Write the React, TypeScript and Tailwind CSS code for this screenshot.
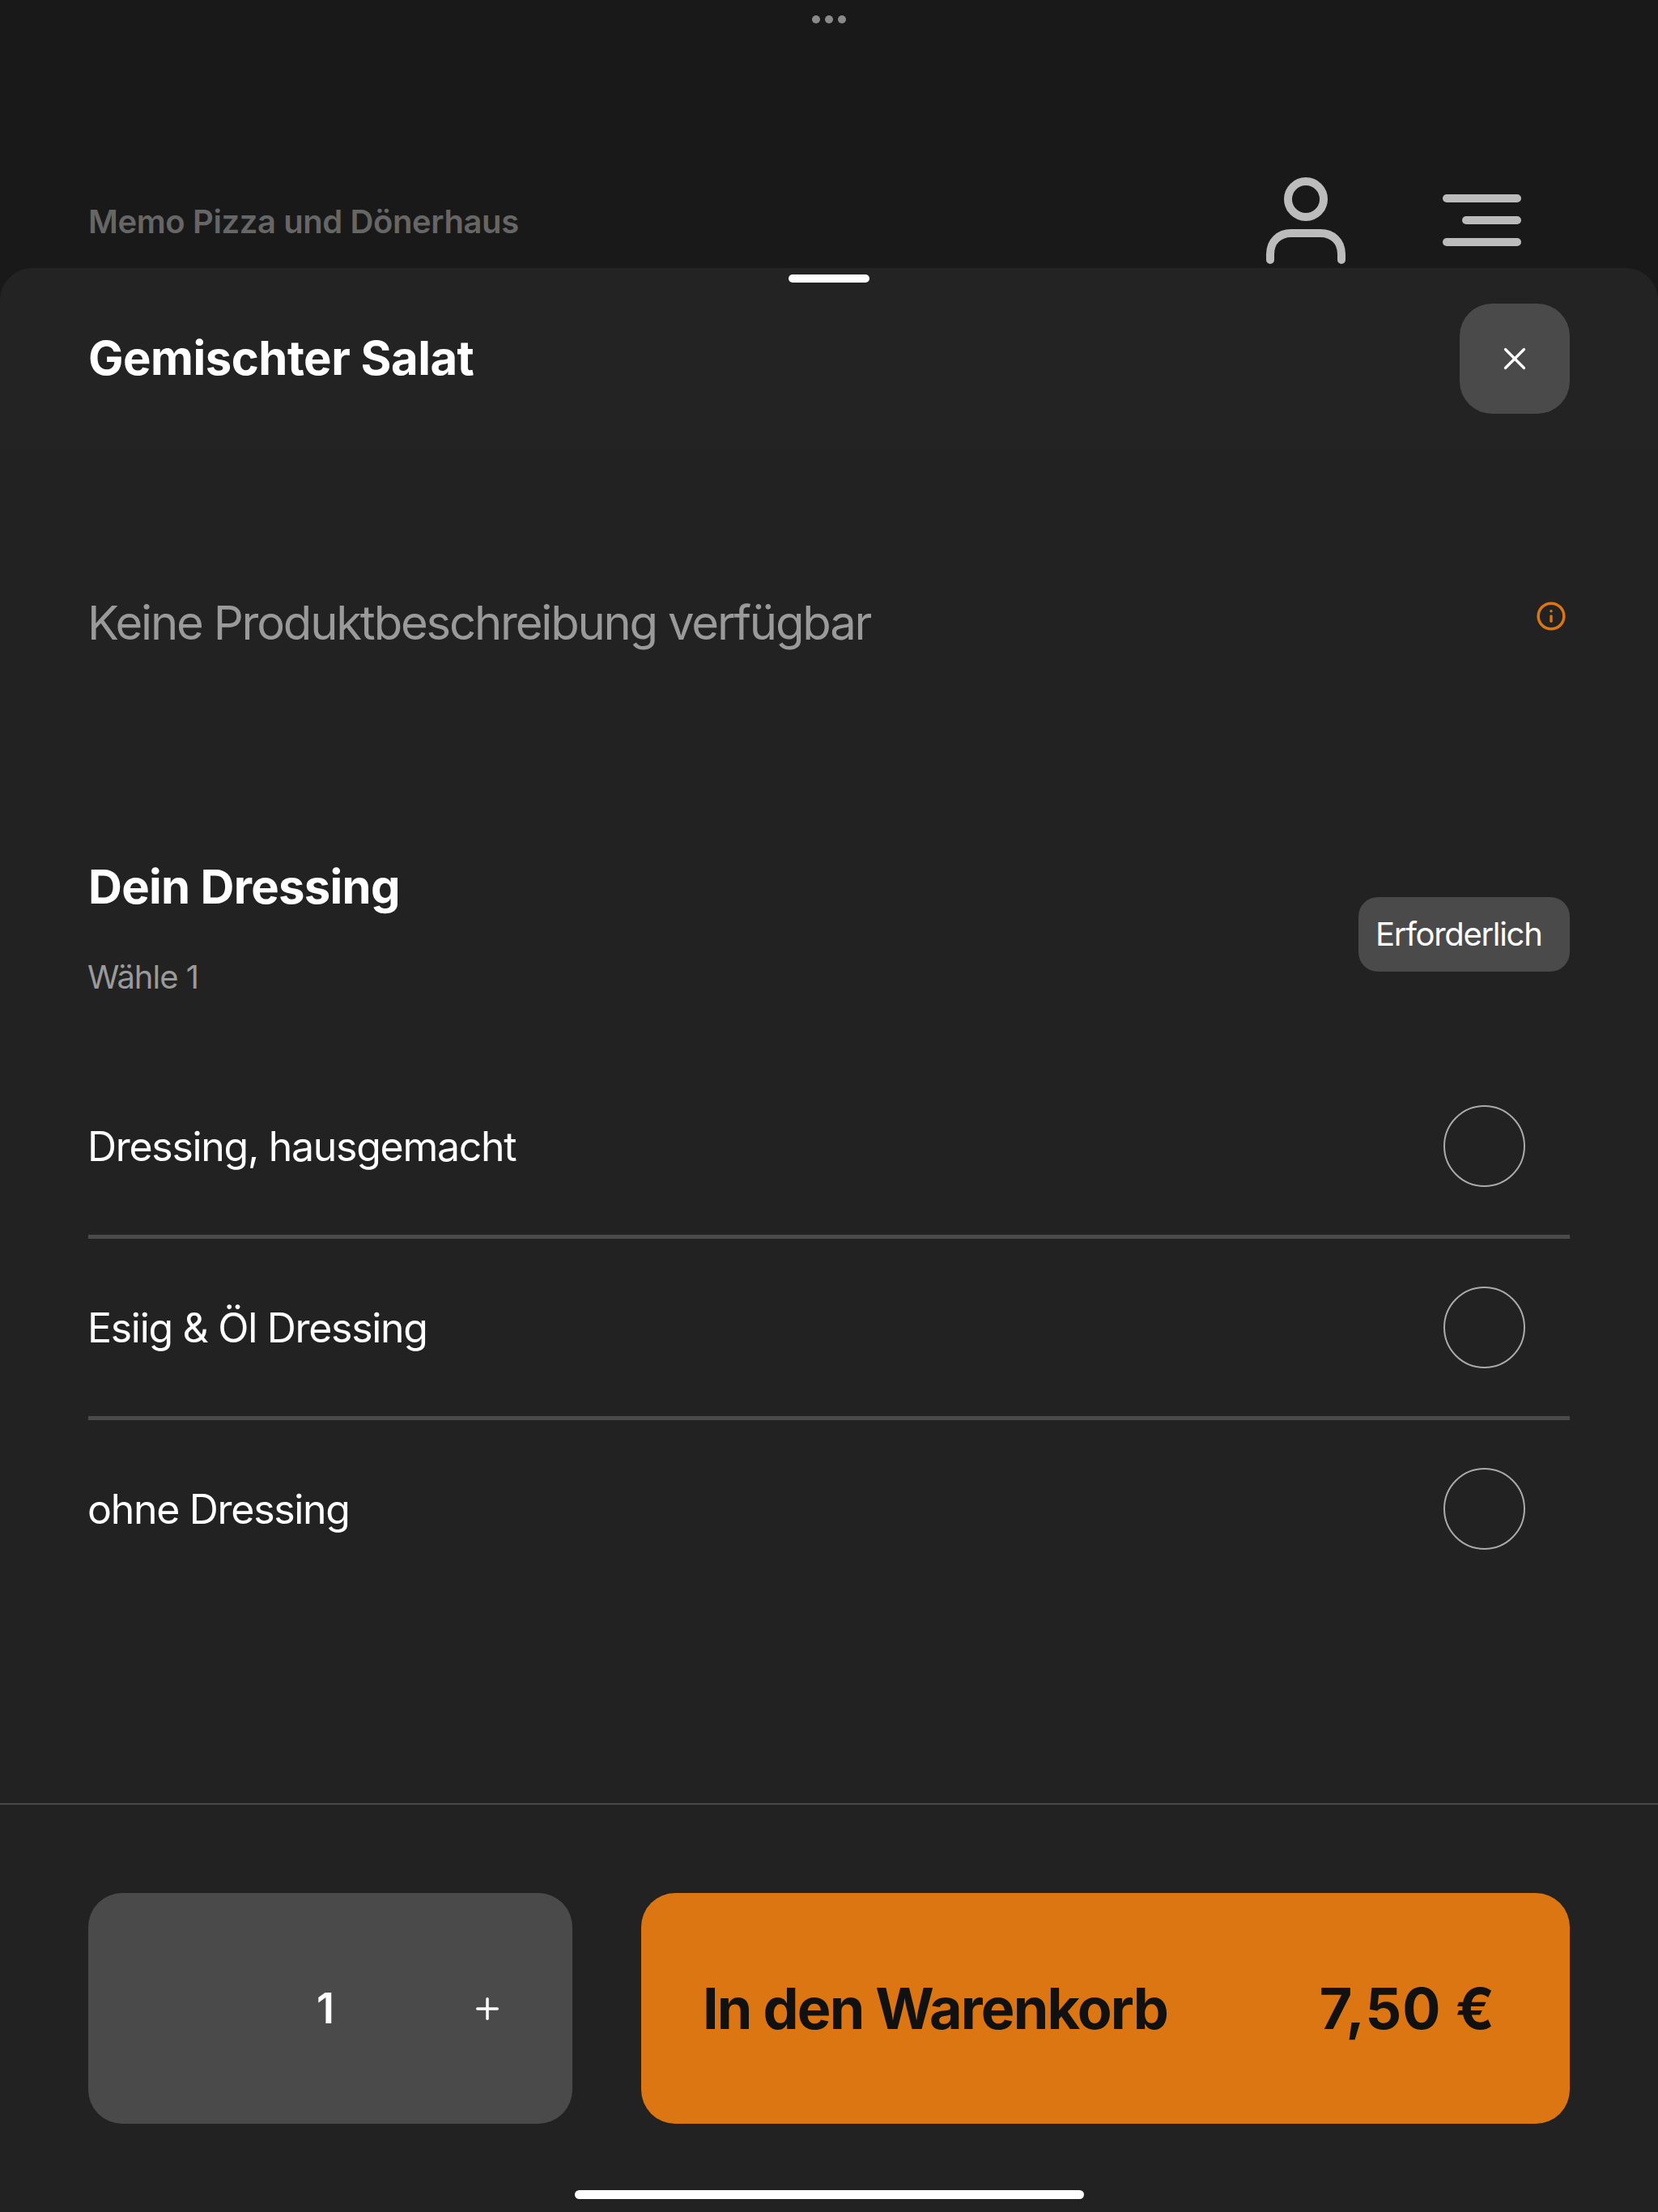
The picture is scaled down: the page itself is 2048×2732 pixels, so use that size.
import { X, Plus, Info } from "lucide-react";

const font = "font-['Inter','Liberation_Sans',sans-serif]";

const options = ["Dressing, hausgemacht", "Esiig & Öl Dressing", "ohne Dressing"];

function PersonIcon() {
  return (
    <svg width="100" height="110" viewBox="0 0 100 110" fill="none" stroke="#bcbcbc" strokeWidth="10" strokeLinecap="round">
      <circle cx="50" cy="28" r="22" />
      <path d="M6 103V96C6 80 17 70 32 70H68C83 70 94 80 94 96V103" />
    </svg>
  );
}

function MenuIcon() {
  return (
    <div className="flex w-[97px] flex-col items-end gap-[17px]">
      <div className="h-[10px] w-[97px] rounded-full bg-[#bcbcbc]" />
      <div className="h-[10px] w-[73px] rounded-full bg-[#bcbcbc]" />
      <div className="h-[10px] w-[97px] rounded-full bg-[#bcbcbc]" />
    </div>
  );
}

export default function App() {
  return (
    <div className={`${font} flex h-[2732px] w-[2048px] flex-col overflow-hidden bg-[#191919]`}>
      {/* page behind the sheet */}
      <div className="flex h-[331px] flex-col">
        <div className="flex justify-center gap-[6px] pt-[19px]">
          <div className="size-[10px] rounded-full bg-[#8a8a8a]" />
          <div className="size-[10px] rounded-full bg-[#8a8a8a]" />
          <div className="size-[10px] rounded-full bg-[#8a8a8a]" />
        </div>
        <div className="mt-[189px] flex items-start pl-[109px]">
          <p className="mt-[32px] flex-1 text-[40px] leading-[48px] font-semibold tracking-[-0.4px] text-[#666666]">
            Memo Pizza und Dönerhaus
          </p>
          <PersonIcon />
          <div className="mr-[169px] ml-[119px] pt-[22px]">
            <MenuIcon />
          </div>
        </div>
      </div>

      {/* sheet */}
      <div className="relative flex flex-1 flex-col rounded-t-[40px] bg-[#222222]">
        <div className="absolute top-[8px] left-[974px] h-[10px] w-[100px] rounded-full bg-white" />

        <div className="flex h-[224px] items-center justify-between rounded-t-[40px] bg-[#232323] pr-[109px] pl-[109px]">
          <h1 className="-mt-[2px] text-[58px] leading-[70px] font-bold tracking-[-0.5px] text-white">Gemischter Salat</h1>
          <button className="flex size-[136px] items-center justify-center rounded-[40px] bg-[#4a4a4a] text-white">
            <X size={46} strokeWidth={1.7} />
          </button>
        </div>

        <div className="flex items-start justify-between pt-[179px] pr-[113px] pl-[108px]">
          <p className="text-[58px] leading-[70px] font-normal tracking-[-2.2px] text-[#9a9a9a]">Keine Produktbeschreibung verfügbar</p>
          <Info size={38} strokeWidth={2.2} className="mt-[8px] text-[#dc7612]" />
        </div>

        <div className="mt-[256px] flex items-center justify-between pr-[109px] pl-[109px]">
          <div>
            <h2 className="text-[58px] leading-[70px] font-bold tracking-[-0.7px] text-white">Dein Dressing</h2>
            <p className="mt-[53px] -ml-[1px] text-[40px] leading-[48px] tracking-[-1px] text-[#9a9a9a]">Wähle 1</p>
          </div>
          <span className="mt-[16px] flex h-[92px] w-[261px] items-center rounded-[24px] bg-[#4a4a4a] pl-[21px] text-[40px] tracking-[-1.3px] text-white">
            Erforderlich
          </span>
        </div>

        <div className="mt-[75px] pr-[109px] pl-[109px]">
          {options.map((o, i) => (
            <div
              key={o}
              className={`flex h-[224px] items-center justify-between border-b-[5px] pr-[55px] ${i < options.length - 1 ? "border-[#4a4a4a]" : "border-transparent"}`}
            >
              <span className="-ml-[1px] text-[50px] leading-[60px] tracking-[-1.3px] text-white">{o}</span>
              <div className="size-[101px] rounded-full border-2 border-[#aaaaaa]" />
            </div>
          ))}
        </div>

        <div className="mt-auto border-t-2 border-[#4a4a4a]">
          <div className="flex h-[503px] gap-[85px] pt-[109px] pr-[109px] pl-[109px]">
            <div className="flex h-[285px] w-[598px] items-center rounded-[42px] bg-[#4a4a4a] pl-[282px] text-white">
              <span className="w-[190px] text-[52px] leading-[60px] font-semibold">1</span>
              <Plus size={42} strokeWidth={2} />
            </div>
            <div className="flex h-[285px] flex-1 items-center justify-between rounded-[42px] bg-[#dc7612] pr-[92px] pl-[76px] text-[70px] leading-[84px] font-bold text-[#111111]">
              <span className="tracking-[-1.8px]">In den Warenkorb</span>
              <span className="tracking-[1px]">7,50 €</span>
            </div>
          </div>
        </div>

        <div className="absolute top-[2374px] left-[710px] h-[11px] w-[629px] rounded-full bg-white" />
      </div>
    </div>
  );
}
